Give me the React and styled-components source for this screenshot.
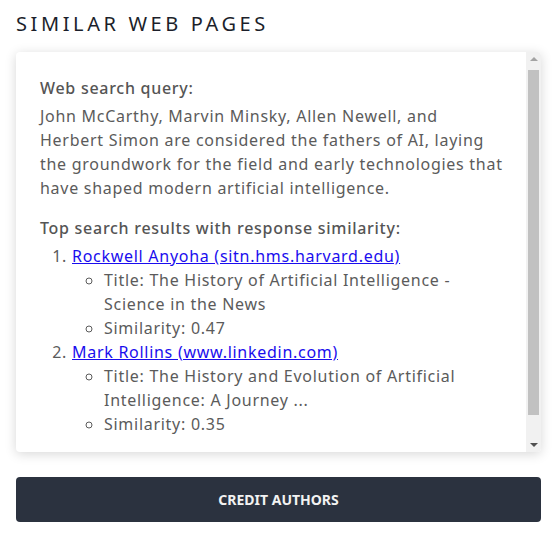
import styled, { createGlobalStyle } from "styled-components";

const GlobalStyle = createGlobalStyle`
  body {
    margin: 0;
    background: #ffffff;
    font-family: "Noto Sans", "Open Sans", sans-serif;
  }
`;

const results = [
  {
    name: "Rockwell Anyoha (sitn.hms.harvard.edu)",
    title: "The History of Artificial Intelligence - Science in the News",
    similarity: "0.47",
  },
  {
    name: "Mark Rollins (www.linkedin.com)",
    title: "The History and Evolution of Artificial Intelligence: A Journey ...",
    similarity: "0.35",
  },
];

function App() {
  return (
    <>
      <GlobalStyle />
      <Page>
        <Heading>Similar Web Pages</Heading>
        <Card>
          <CardBody>
            <Label>Web search query:</Label>
            <Query>
              John McCarthy, Marvin Minsky, Allen Newell, and Herbert Simon are
              considered the fathers of AI, laying the groundwork for the field
              and early technologies that have shaped modern artificial
              intelligence.
            </Query>
            <Label>Top search results with response similarity:</Label>
            <Results>
              {results.map((r) => (
                <li key={r.name}>
                  <a href="#">{r.name}</a>
                  <Details>
                    <li>Title: {r.title}</li>
                    <li>Similarity: {r.similarity}</li>
                  </Details>
                </li>
              ))}
            </Results>
          </CardBody>
          <ScrollBar aria-hidden="true">
            <ArrowButton $dir="up" />
            <Track>
              <Thumb />
            </Track>
            <ArrowButton $dir="down" />
          </ScrollBar>
        </Card>
        <CreditButton>Credit Authors</CreditButton>
      </Page>
    </>
  );
}

const Page = styled.div`
  padding: 10px 15px 16px 16px;
  display: flex;
  flex-direction: column;
`;

const Heading = styled.h2`
  margin: 0 0 14px;
  font-size: 20px;
  font-weight: 400;
  line-height: 28px;
  letter-spacing: 3.6px;
  text-transform: uppercase;
  color: #1c1f2b;
`;

const Card = styled.div`
  display: flex;
  height: 400px;
  background: #fff;
  border-radius: 4px;
  overflow: hidden;
  box-shadow: 0 2px 12px rgba(0, 0, 0, 0.16);
`;

const CardBody = styled.div`
  flex: 1;
  min-width: 0;
  overflow: hidden;
  padding: 24px 23px 24px 24px;
  color: #5b5b5b;
  font-size: 16px;
  line-height: 24px;
  letter-spacing: 0.72px;
`;

const ScrollBar = styled.div`
  width: 15px;
  flex-shrink: 0;
  display: flex;
  flex-direction: column;
  background: #f1f1f1;
`;

const ArrowButton = styled.div`
  height: 15px;
  display: flex;
  align-items: center;
  justify-content: center;
  &::after {
    content: "";
    width: 0;
    height: 0;
    border-left: 4px solid transparent;
    border-right: 4px solid transparent;
    ${(p) =>
      p.$dir === "up"
        ? "border-bottom: 4px solid #a3a3a3; margin-top: -1px;"
        : "border-top: 4px solid #505050; margin-top: 1px;"}
  }
`;

const Track = styled.div`
  flex: 1;
  padding: 3px 2px;
`;

const Thumb = styled.div`
  height: 345px;
  background: #c1c1c1;
`;

const Label = styled.p`
  margin: 0 0 4px;
  font-weight: 500;
  color: #555;
`;

const Query = styled.p`
  margin: 0 0 16px;
`;

const Results = styled.ol`
  margin: 0;
  padding-left: 32px;
  a {
    color: #1a0dee;
  }
`;

const Details = styled.ul`
  margin: 0;
  padding-left: 32px;
  list-style-type: circle;
`;

const CreditButton = styled.button`
  margin-top: 25px;
  height: 45px;
  border: none;
  border-radius: 4px;
  background: #2b323f;
  color: #f2f2f2;
  font-family: "Noto Sans", "Open Sans", sans-serif;
  font-size: 14px;
  font-weight: 700;
  text-transform: uppercase;
  cursor: pointer;
`;

export default App;
